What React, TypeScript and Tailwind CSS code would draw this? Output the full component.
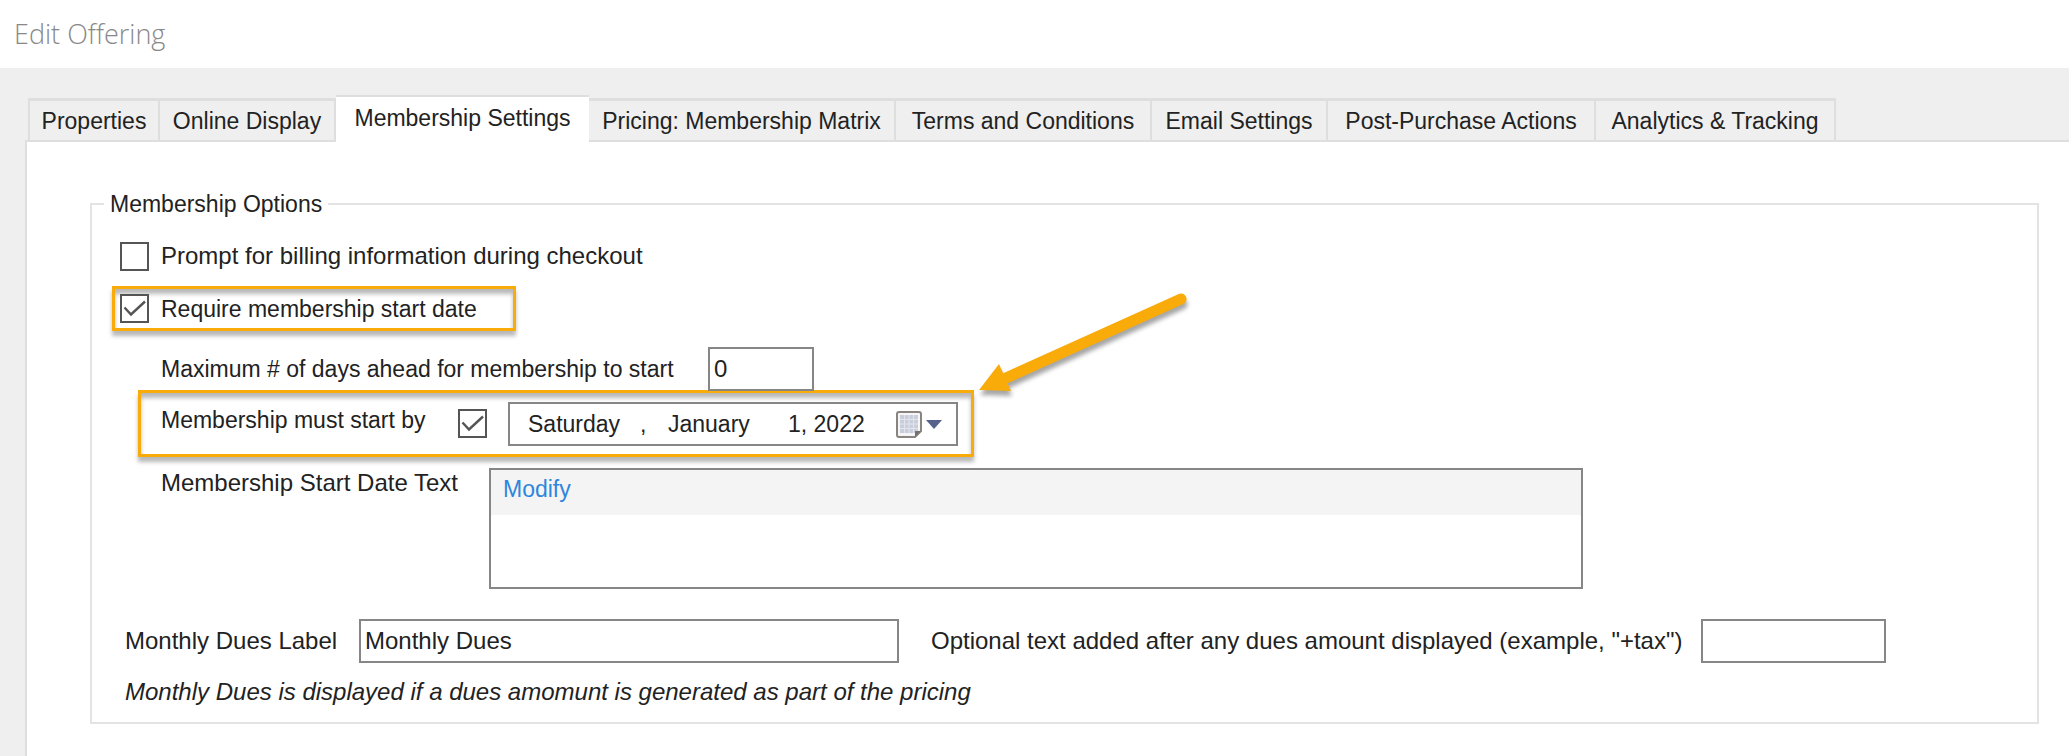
import { useState } from 'react'

const TABS = [
  { label: 'Properties', width: 'w-[132px]' },
  { label: 'Online Display', width: 'w-[176px]' },
  { label: 'Membership Settings', width: 'w-[253px]' },
  { label: 'Pricing: Membership Matrix', width: 'w-[307px]' },
  { label: 'Terms and Conditions', width: 'w-[256px]' },
  { label: 'Email Settings', width: 'w-[176px]' },
  { label: 'Post-Purchase Actions', width: 'w-[268px]' },
  { label: 'Analytics & Tracking', width: 'w-[240px]' },
]

const INPUT = 'h-11 border-2 border-[#868686] bg-white px-1 outline-none'
const HIGHLIGHT =
  'flex items-center border-[3px] border-[#f9ab0a] text-[23px] shadow-[0_5px_4px_rgba(0,0,0,0.28),inset_0_5px_4px_rgba(0,0,0,0.28)]'

function CheckBox({ id, defaultChecked = false }: { id: string; defaultChecked?: boolean }) {
  return (
    <span className="grid size-[29px] shrink-0">
      <input
        id={id}
        type="checkbox"
        defaultChecked={defaultChecked}
        className="peer size-full appearance-none border-2 border-[#555] bg-white [grid-area:1/1]"
      />
      <svg
        viewBox="0 0 29 29"
        className="pointer-events-none hidden size-full [grid-area:1/1] peer-checked:block"
        aria-hidden
      >
        <path d="M4.5 13.5 L11 20.5 L25 7.5" fill="none" stroke="#555" strokeWidth="2.4" />
      </svg>
    </span>
  )
}

function CalendarIcon() {
  return (
    <svg width="46" height="30" viewBox="0 0 46 30" aria-hidden>
      <path d="M3 3 H23 Q25 3 25 5 V22 L19 28 H3 Q1 28 1 26 V5 Q1 3 3 3Z" fill="#f6f6f8" stroke="#8a8480" strokeWidth="2" />
      <rect x="4" y="6" width="18" height="18" fill="#c9cedb" />
      <path d="M4 10.5H22M4 15H22M4 19.5H22M8.5 6V24M13 6V24M17.5 6V24" stroke="#e2e5ec" strokeWidth="1" />
      <path d="M19 28 V22 H25Z" fill="#77716e" />
      <path d="M30 11 H46 L38 20Z" fill="#56618c" />
    </svg>
  )
}

function PointerArrow() {
  return (
    <svg
      className="pointer-events-none absolute top-[290px] left-[975px] drop-shadow-[1px_5px_2px_rgba(0,0,0,0.35)]"
      width="220"
      height="110"
      viewBox="0 0 220 110"
      aria-hidden
    >
      <path d="M206 9 L31 88" stroke="#f9ab0a" strokeWidth="11" strokeLinecap="round" />
      <path d="M4 100 L24 74 L36 101Z" fill="#f9ab0a" />
    </svg>
  )
}

export default function App() {
  const [active, setActive] = useState('Membership Settings')

  return (
    <div className="relative flex min-h-screen flex-col bg-[#efefef] font-['Liberation_Sans',Arial,sans-serif] text-[24px] leading-[30px] text-[#222]">
      <header className="flex h-[68px] items-center bg-white pl-[14px]">
        <h1 className="font-['Open_Sans',sans-serif] text-[27px] font-light text-[#888]">Edit Offering</h1>
      </header>

      <div className="flex items-end pt-[27px] pl-[28px]" role="tablist">
        {TABS.map((tab) => (
          <button
            key={tab.label}
            type="button"
            role="tab"
            aria-selected={tab.label === active}
            onClick={() => setActive(tab.label)}
            className={`${tab.width} shrink-0 text-center text-[23px] whitespace-nowrap first:border-l-2 ${
              tab.label === active
                ? 'z-10 -mb-[3px] h-[48px] border-t-2 border-[#dedede] bg-white pb-1'
                : 'h-[42px] border-t-[3px] border-r-2 border-[#dedede]'
            }`}
          >
            {tab.label}
          </button>
        ))}
      </div>

      <main className="ml-[25px] flex-1 border-t-2 border-l-2 border-[#dedede] bg-white pt-[47px] pr-[30px] pl-[63px]">
        <fieldset className="border-2 border-[#e3e3e3] pb-[15px] pl-5">
          <legend className="-ml-2 px-1.5 text-[23px]">Membership Options</legend>

          <div className="mt-[22px] flex items-center gap-3 pl-2">
            <CheckBox id="billing" />
            <label htmlFor="billing">Prompt for billing information during checkout</label>
          </div>

          <div className={`${HIGHLIGHT} mt-[15px] h-[45px] w-[404px] gap-3 pl-[5px]`}>
            <CheckBox id="require-start" defaultChecked />
            <label htmlFor="require-start">Require membership start date</label>
          </div>

          <div className="mt-4 flex h-[43px] items-center pl-[49px]">
            <label htmlFor="max-days" className="w-[547px] text-[23px]">
              Maximum # of days ahead for membership to start
            </label>
            <input id="max-days" defaultValue="0" className={`${INPUT} w-[106px]`} />
          </div>

          <div className={`${HIGHLIGHT} ml-[26px] h-[67px] w-[836px] pl-5`}>
            <label htmlFor="start-by" className="w-[297px] pb-2">
              Membership must start by
            </label>
            <CheckBox id="start-by" defaultChecked />
            <button
              type="button"
              aria-haspopup="dialog"
              className="ml-[21px] flex h-11 w-[450px] items-center border-2 border-[#868686] bg-white pl-[18px] text-left"
            >
              <span className="w-[112px]">Saturday</span>
              <span className="w-[28px]">,</span>
              <span className="w-[120px]">January</span>
              <span className="w-[108px]">1, 2022</span>
              <CalendarIcon />
            </button>
          </div>

          <div className="mt-[11px] flex items-start pl-[49px]">
            <span className="w-[328px] shrink-0">Membership Start Date Text</span>
            <div className="h-[121px] max-w-[1094px] flex-1 border-2 border-[#868686]">
              <div className="h-[45px] bg-[#f4f4f4] pt-1 pl-3">
                <a href="#modify" className="text-[23px] text-[#2f86dc]">
                  Modify
                </a>
              </div>
            </div>
          </div>

          <div className="mt-[30px] flex items-center pl-[13px]">
            <label htmlFor="dues-label" className="w-[234px]">
              Monthly Dues Label
            </label>
            <input id="dues-label" defaultValue="Monthly Dues" className={`${INPUT} w-[540px]`} />
            <label htmlFor="dues-suffix" className="ml-8 w-[770px]">
              Optional text added after any dues amount displayed (example, "+tax")
            </label>
            <input id="dues-suffix" className={`${INPUT} w-[185px]`} />
          </div>

          <p className="mt-[14px] pl-[13px] italic">
            Monthly Dues is displayed if a dues amomunt is generated as part of the pricing
          </p>
        </fieldset>
      </main>

      <PointerArrow />
    </div>
  )
}
